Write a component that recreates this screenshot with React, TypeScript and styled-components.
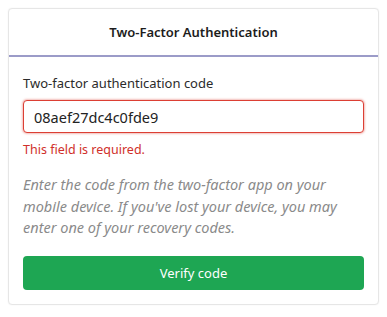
import React from "react";
import styled, { createGlobalStyle } from "styled-components";

const Global = createGlobalStyle`
  html, body { margin: 0; padding: 0; background: #ffffff; }
  body { padding: 8px; font-family: "Noto Sans", "Open Sans", sans-serif; color: #212529; }
  * { box-sizing: border-box; }
`;

const Card = styled.div`
  width: 371px;
  border: 1px solid #e6e6e6;
  border-radius: 4px;
  background: #fff;
  box-shadow: 0 0 2px rgba(0, 0, 0, 0.05);
`;

const Header = styled.div`
  height: 48px;
  display: flex;
  align-items: center;
  justify-content: center;
  border-bottom: 2px solid #9b9bc8;
  font-size: 13px;
  font-weight: 600;
  color: #1c1c1c;
`;

const Body = styled.form`
  padding: 16px 14px 14px 14px;
  display: flex;
  flex-direction: column;
`;

const Label = styled.label`
  font-size: 13px;
  color: #2b2b2b;
  line-height: 20px;
  margin-bottom: 7px;
`;

const Input = styled.input<{ $invalid?: boolean }>`
  height: 33px;
  width: 100%;
  padding: 0 10px;
  font-family: inherit;
  font-size: 14.5px;
  color: #222;
  border: 1.5px solid ${(p) => (p.$invalid ? "#dc3f34" : "#ced4da")};
  border-radius: 4px;
  outline: none;
  box-shadow: ${(p) => (p.$invalid ? "0 0 2px 1px rgba(220, 63, 52, 0.35)" : "none")};
`;

const ErrorText = styled.div`
  color: #d0302a;
  font-size: 12.5px;
  line-height: 18px;
  margin-top: 8px;
`;

const Help = styled.p`
  margin: 15px 0 0;
  font-size: 14.5px;
  font-style: italic;
  line-height: 21.5px;
  color: #8a8a8a;
`;

const Button = styled.button`
  margin-top: 17px;
  height: 34px;
  width: 100%;
  border: none;
  border-radius: 4px;
  background: #1ea653;
  color: #fff;
  font-family: inherit;
  font-size: 13px;
  cursor: pointer;
`;

export default function App() {
  return (
    <>
      <Global />
      <Card>
        <Header>Two-Factor Authentication</Header>
        <Body onSubmit={(e) => e.preventDefault()}>
          <Label htmlFor="code">Two-factor authentication code</Label>
          <Input id="code" $invalid defaultValue="08aef27dc4c0fde9" />
          <ErrorText>This field is required.</ErrorText>
          <Help>
            Enter the code from the two-factor app on your mobile device. If you've lost your device, you may enter one of your recovery codes.
          </Help>
          <Button type="submit">Verify code</Button>
        </Body>
      </Card>
    </>
  );
}
